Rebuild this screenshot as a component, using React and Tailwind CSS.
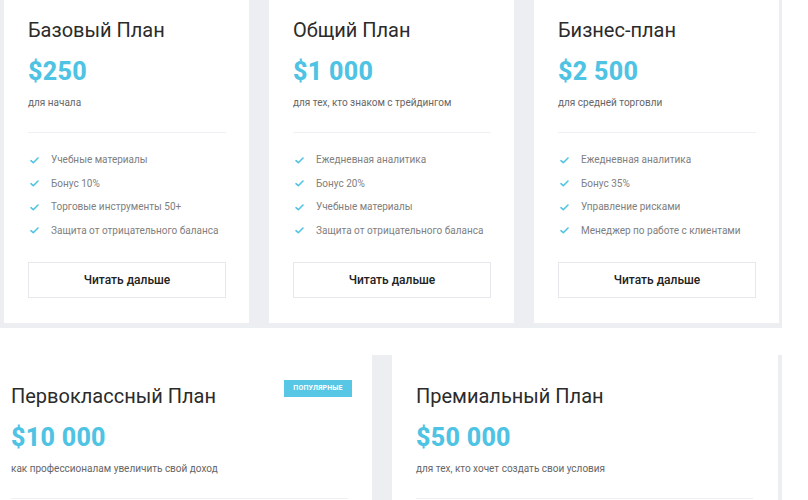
import React from 'react';

const TOP_PLANS = [
  {
    title: 'Базовый План',
    price: '$250',
    note: 'для начала',
    features: ['Учебные материалы', 'Бонус 10%', 'Торговые инструменты 50+', 'Защита от отрицательного баланса'],
  },
  {
    title: 'Общий План',
    price: '$1 000',
    note: 'для тех, кто знаком с трейдингом',
    features: ['Ежедневная аналитика', 'Бонус 20%', 'Учебные материалы', 'Защита от отрицательного баланса'],
  },
  {
    title: 'Бизнес-план',
    price: '$2 500',
    note: 'для средней торговли',
    features: ['Ежедневная аналитика', 'Бонус 35%', 'Управление рисками', 'Менеджер по работе с клиентами'],
  },
];

const Check = () => (
  <svg viewBox="0 0 10 8" className="w-[9px] h-[7px] shrink-0" fill="none">
    <path d="M1 4.2 3.6 6.6 9 1.2" stroke="#4ec3e3" strokeWidth="1.8" strokeLinecap="round" strokeLinejoin="round" />
  </svg>
);

function PlanHead({ title, price, note }) {
  return (
    <>
      <h3 className="text-[20px] leading-[24px] text-[#2b2b2b] font-normal">{title}</h3>
      <div className="mt-[15px] text-[25px] leading-[30px] font-extrabold text-[#4ec3e3] tracking-[0.3px]">{price}</div>
      <p className="mt-[9px] text-[10px] leading-[14px] text-[#666]">{note}</p>
    </>
  );
}

function TopCard({ plan, last }) {
  return (
    <div className={`bg-white w-[245px] h-[323px] pl-[24px] pr-[23px] pt-[18px] ${last ? '' : 'mr-[20px]'}`}>
      <PlanHead {...plan} />
      <div className="mt-[22px] border-t border-[#eef0f3]" />
      <ul className="mt-[20px] space-y-[9.5px]">
        {plan.features.map((f) => (
          <li key={f} className="flex items-center gap-[12px] pl-[2px] text-[10px] leading-[14px] text-[#808080]">
            <Check />
            <span>{f}</span>
          </li>
        ))}
      </ul>
      <button className="mt-[24px] w-full h-[36px] border border-[#e6e8eb] text-[12px] font-medium text-[#222]">
        Читать дальше
      </button>
    </div>
  );
}

export default function App() {
  return (
    <div className="w-[808px] h-[500px] overflow-hidden bg-white" style={{ fontFamily: 'Roboto, "Noto Sans", sans-serif' }}>
      <div className="flex w-[782px] h-[328px] bg-[#eceef2] pl-[4px]">
        {TOP_PLANS.map((p, i) => (
          <TopCard key={p.title} plan={p} last={i === TOP_PLANS.length - 1} />
        ))}
      </div>

      <div className="flex mt-[27px]">
        {/* popular card */}
        <div className="w-[372px] h-[200px] bg-white pl-[11px] pr-[24px] pt-[29px] relative">
          <span className="absolute left-[284px] top-[25px] h-[17px] w-[68px] flex items-center justify-center bg-[#58c6e5] text-white text-[7px] font-bold tracking-wide">
            ПОПУЛЯРНЫЕ
          </span>
          <PlanHead title="Первоклассный План" price="$10 000" note="как профессионалам увеличить свой доход" />
          <div className="mt-[22px] border-t border-[#eef0f3]" />
        </div>
        <div className="flex-1 max-w-[410px] bg-[#eceef2] pl-[20px] pr-[4px]">
          <div className="bg-white h-full pl-[24px] pr-[25px] pt-[29px]">
            <PlanHead title="Премиальный План" price="$50 000" note="для тех, кто хочет создать свои условия" />
            <div className="mt-[22px] border-t border-[#eef0f3]" />
          </div>
        </div>
      </div>
    </div>
  );
}
